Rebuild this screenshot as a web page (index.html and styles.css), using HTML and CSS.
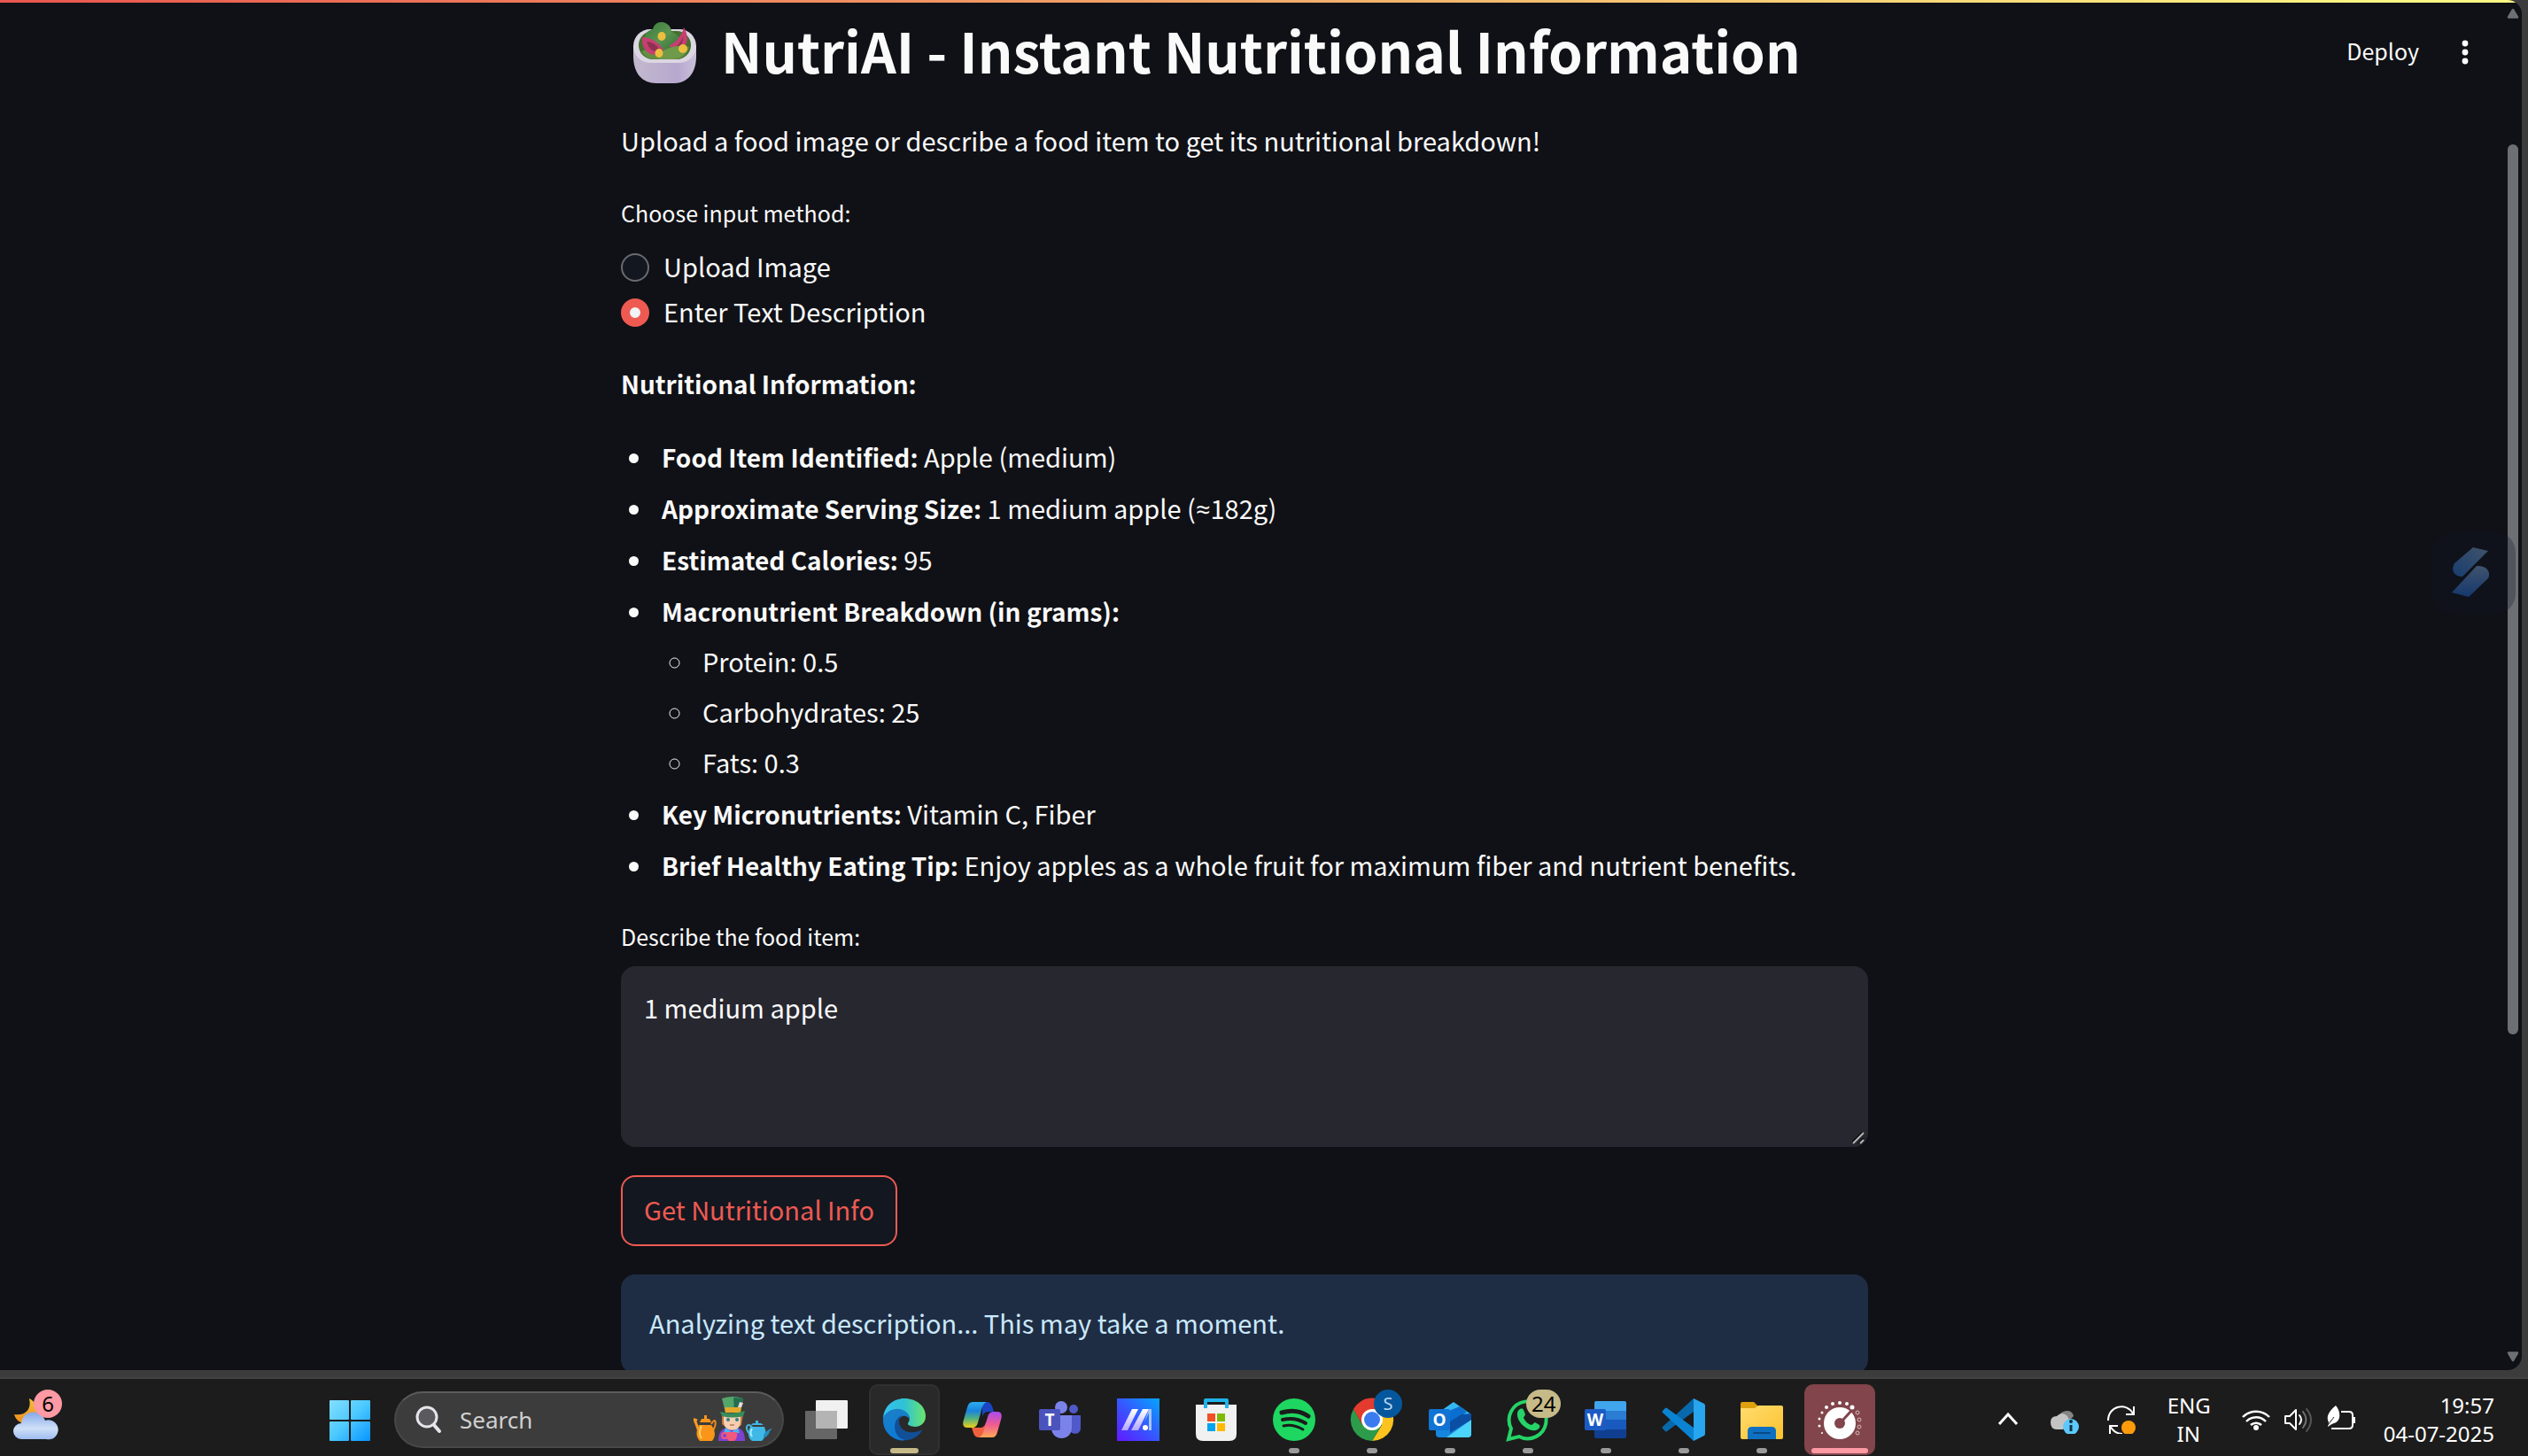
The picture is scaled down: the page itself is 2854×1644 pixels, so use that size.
FILE: index.html
```html
<!DOCTYPE html>
<html lang="en">
<head>
<meta charset="utf-8">
<meta name="viewport" content="width=device-width, initial-scale=1">
<title>NutriAI</title>
<link rel="stylesheet" href="styles.css">
</head>
<body>
<div class="browser">
  <div class="page">
    <div class="decoration"></div>
    <header class="toolbar">
      <button class="deploy" type="button">Deploy</button>
      <button class="kebab" type="button" aria-label="Main menu">
        <svg width="8" height="28" viewBox="0 0 8 28" fill="#fff"><circle cx="4" cy="4" r="3.4"/><circle cx="4" cy="14" r="3.4"/><circle cx="4" cy="24" r="3.4"/></svg>
      </button>
    </header>

    <main class="content">
      <h1 class="title">
        <svg class="salad" width="98" height="86" viewBox="0 0 98 86" aria-hidden="true">
          <defs>
            <linearGradient id="bowl" x1="0" x2="1"><stop offset="0" stop-color="#c3b9cd"/><stop offset=".7" stop-color="#b6a8cf"/><stop offset="1" stop-color="#cbc0db"/></linearGradient>
            <linearGradient id="leaf" x1="0" x2="1" y2="1"><stop offset="0" stop-color="#377a3b"/><stop offset=".5" stop-color="#5c9450"/><stop offset="1" stop-color="#2f6b33"/></linearGradient>
          </defs>
          <path d="M14 38V50c0 20 10 31 26 31h19c16 0 26-11 26-31V38z" fill="url(#bowl)"/>
          <rect x="14" y="20" width="71" height="38" rx="19" fill="#dcd6e3"/>
          <rect x="20" y="22" width="59" height="32" rx="16" fill="#44702d"/>
          <path d="M23 45q26 -12 54-5q-4 14-17 14H40q-12 0-17-9z" fill="#648f42"/>
          <path d="M28 36c-4-12 4-15 8-16 2-8 10-10 16-6 5 3 4 8 7 10 10 3 9 16 2 20-13 5-27 2-33-8z" fill="url(#leaf)"/>
          <path d="M24 29c8 0 17 4 24 14-4 10-26 8-24-14z" fill="#c63f72"/><path d="M29 34q8 0 15 9-10 6-15-9z" fill="#8e3151"/>
          <path d="M71 18c6 9 5 22-4 25-5 0-9-2-13-4 8-4 15-12 17-21z" fill="#c63f72"/><path d="M70 28q-2 8-9 12 9 3 9-12z" fill="#8e3151"/>
          <path d="M48 44q15-8 27-4-3 12-16 14H43z" fill="#6f9a4a"/>
          <g fill="#edbf3e"><ellipse cx="46" cy="28" rx="4.5" ry="5"/><ellipse cx="43" cy="47" rx="4.5" ry="5"/><ellipse cx="70" cy="42" rx="5" ry="5"/></g>
        </svg>
        <span>NutriAI - Instant Nutritional Information</span>
      </h1>
      <p class="text">Upload a food image or describe a food item to get its nutritional breakdown!</p>

      <fieldset class="radios">
        <legend class="label">Choose input method:</legend>
        <label class="radio"><input type="radio" name="method"><span>Upload Image</span></label>
        <label class="radio"><input type="radio" name="method" checked><span>Enter Text Description</span></label>
      </fieldset>

      <p class="text heading"><strong>Nutritional Information:</strong></p>
      <ul class="facts">
        <li><strong>Food Item Identified:</strong> Apple (medium)</li>
        <li><strong>Approximate Serving Size:</strong> 1 medium apple (<span class="approx">≈</span>182g)</li>
        <li><strong>Estimated Calories:</strong> 95</li>
        <li><strong>Macronutrient Breakdown (in grams):</strong>
          <ul class="macros">
            <li>Protein: 0.5</li>
            <li>Carbohydrates: 25</li>
            <li>Fats: 0.3</li>
          </ul>
        </li>
        <li><strong>Key Micronutrients:</strong> Vitamin C, Fiber</li>
        <li><strong>Brief Healthy Eating Tip:</strong> Enjoy apples as a whole fruit for maximum fiber and nutrient benefits.</li>
      </ul>

      <label class="label" for="food">Describe the food item:</label>
      <div class="field">
        <textarea class="food" id="food">1 medium apple</textarea>
        <svg class="grip" width="14" height="14" viewBox="0 0 14 14" aria-hidden="true"><path d="M0 12L12 0M7 13L13 7" stroke="#0c0c0e" stroke-width="2"/><path d="M1 13L13 1M9 13l4-4" stroke="#b4b4b6" stroke-width="2"/></svg>
      </div>
      <button class="submit" type="button">Get Nutritional Info</button>
      <div class="info" role="status">Analyzing text description... This may take a moment.</div>
    </main>

    <div class="scrollbar" aria-hidden="true">
      <svg width="14" height="12" viewBox="0 0 14 12"><path d="M2 10.500h10L7 2z" fill="#6e6f73" stroke="#6e6f73" stroke-width="2.500" stroke-linejoin="round"/></svg>
      <div class="track"><div class="thumb"></div></div>
      <svg width="14" height="12" viewBox="0 0 14 12"><path d="M2 1.500h10L7 10z" fill="#6e6f73" stroke="#6e6f73" stroke-width="2.500" stroke-linejoin="round"/></svg>
    </div>

    <button class="extension" type="button" aria-label="Open extension">
      <svg width="94" height="94" viewBox="0 0 94 94">
        <defs>
          <linearGradient id="ext1" x1="1" x2="0" y2="1"><stop offset="0" stop-color="#42536a"/><stop offset="1" stop-color="#173e70"/></linearGradient>
          <linearGradient id="ext2" x1="0" x2="0" y2="1"><stop offset="0" stop-color="#40536d"/><stop offset="1" stop-color="#14386d"/></linearGradient>
        </defs>
        <path d="M46 18l17 4-29 29c-8 0-14-6-9-15z" fill="url(#ext1)"/>
        <path d="M50 39c9-1 17 5 13 14L41 74l-19-5z" fill="url(#ext2)"/>
      </svg>
    </button>
  </div>
</div>

<footer class="taskbar">
  <div class="widgets">
    <button class="app" type="button" aria-label="Weather">
      <svg width="80" height="80" viewBox="0 0 80 80">
        <defs>
          <linearGradient id="moon" x1="0" x2="0" y2="1"><stop offset="0" stop-color="#f2c23a"/><stop offset="1" stop-color="#f28a1c"/></linearGradient>
          <linearGradient id="cloud" x1="0" x2="0" y2="1"><stop offset="0" stop-color="#86a8ea"/><stop offset=".6" stop-color="#cfe0f7"/><stop offset="1" stop-color="#9dbcf0"/></linearGradient>
        </defs>
        <path d="M33 16c3 12-4 20-17 18 2 7 8 11 14 10l12-8c2-10-3-17-9-20z" fill="url(#moon)"/>
        <path d="M24 62a9 9 0 0 1 0-18c2-16 22-16 27-3a11 11 0 1 1 1 21z" fill="url(#cloud)"/>
      </svg>
      <span class="badge badge-pink">6</span>
    </button>
  </div>

  <nav class="apps" aria-label="Taskbar">
    <button class="app" type="button" aria-label="Start">
      <svg width="80" height="80" viewBox="0 0 80 80">
        <defs><linearGradient id="win" gradientUnits="userSpaceOnUse" x1="17" y1="18" x2="63" y2="64"><stop offset="0" stop-color="#84dfff"/><stop offset=".5" stop-color="#4bc8ff"/><stop offset="1" stop-color="#0794ff"/></linearGradient></defs>
        <g fill="url(#win)"><rect x="17" y="18" width="22" height="22" rx="1"/><rect x="41" y="18" width="22" height="22" rx="1"/><rect x="17" y="42" width="22" height="22" rx="1"/><rect x="41" y="42" width="22" height="22" rx="1"/></g>
      </svg>
    </button>

    <div class="search">
      <svg width="30" height="32" viewBox="0 0 30 32" fill="none" stroke="#e4e6ea" aria-hidden="true"><circle cx="13" cy="13" r="11" stroke-width="3" fill="#5a5a5c"/><path d="M21 22l6 7" stroke-width="4" stroke-linecap="round"/></svg>
      <input type="search" placeholder="Search" aria-label="Search">
      <svg width="90" height="52" viewBox="0 0 90 52" aria-hidden="true">
        <path d="M4 27l-3-1q4 9 5 14" fill="none" stroke="#f59a22" stroke-width="3"/><path d="M20 31c5-9 7-1 1 9" fill="none" stroke="#f08a1a" stroke-width="2"/>
        <path d="M7 29h13l-2-4h-3v-4h-3v4H9zM6 32c-3 7-4 12 1 18h14c5-6 3-12-1-18z" fill="#f99519"/><path d="M9 33c-3 6-3 10 0 14" fill="none" stroke="#ffcf66" stroke-width="2"/>
        <path d="M28 50c0-10 4-14 10-15h11c6 1 9 6 9 15z" fill="#7d42d1"/><path d="M36 35l7 5 7-5 2 6H34z" fill="#43b8ee"/>
        <path d="M32 20h24l-2 12-5 4 3-14H34l3 13-5-4z" fill="#c27a43"/>
        <path d="M34 22h19v6c0 13-19 13-19 0z" fill="#f7cfae"/><circle cx="39" cy="26" r="2" fill="#2b7f8c"/><circle cx="49" cy="26" r="2" fill="#2b7f8c"/><path d="M41 32h5" stroke="#9a4b3b"/>
        <path d="M32 2q12-4 24 0l-3 16H36z" fill="#54a66b"/><path d="M45 1q6 0 11 1l-3 16h-7z" fill="#246e50"/><path d="M35 12h19l-1 6H36z" fill="#e5a92d"/><path d="M50 12l2-6 4 1-2 5z" fill="#ead9dc"/><path d="M30 17q14 4 28-1l-2 6q-12 3-24 0z" fill="#388c5c"/>
        <path d="M37 40h12q1 7-3 10h-6q-4-3-3-10z" fill="#f2597c"/><circle cx="35" cy="44" r="3" fill="none" stroke="#f2597c" stroke-width="2"/>
        <path d="M66 34c-5-5-9 0-3 8" fill="none" stroke="#42b7de" stroke-width="2"/><path d="M65 32h14l-3-2h-3v-3h-3v3h-3zM64 34h16c3 8 1 12-3 16H66c-5-4-5-10-2-16z" fill="#3fb8e6"/><path d="M79 43q5-7 10-7-3 2-4 6-3 4-6 5z" fill="#258ebd"/><path d="M66 36q-3 5 0 9" fill="none" stroke="#a8ecff" stroke-width="2"/>
      </svg>
    </div>

    <button class="app" type="button" aria-label="Task view">
      <svg width="80" height="80" viewBox="0 0 80 80">
        <rect x="28" y="18" width="36" height="32" rx="1" fill="#f1f1f1"/><rect x="16" y="30" width="36" height="32" rx="1" fill="#666"/><path d="M28 30h23q1 0 1 1v19H28z" fill="#b4b4b4"/>
      </svg>
    </button>

    <button class="app app-open" type="button" aria-label="Edge">
      <svg width="80" height="80" viewBox="0 0 80 80">
        <defs>
          <linearGradient id="e1" x1="0" x2="1"><stop offset="0" stop-color="#35c1f1"/><stop offset=".5" stop-color="#2fc2d5"/><stop offset="1" stop-color="#6be56a"/></linearGradient>
          <linearGradient id="e2" x1="0" x2="0" y2="1"><stop offset="0" stop-color="#1c7fc6"/><stop offset="1" stop-color="#0b7bd8"/></linearGradient>
        </defs>
        <path d="M16 38C17 24 28 16 40 16c14 0 24 9 24 20 0 8-6 12-12 12-5 0-9-2-8-4 3-4 2-9-2-12-8-6-20-4-26 6z" fill="url(#e1)"/>
        <path d="M16 38c4-9 16-13 24-8 4 2 6 6 6 10-1-2-4-5-8-4-9 3-5 21 11 22-6 6-12 6-15 5-11-3-19-12-18-25z" fill="url(#e2)"/>
        <path d="M37 35c-6 5-3 17 8 19 7 1 12-1 15-3-1 5-10 13-19 12-14-2-16-23-4-28z" fill="#114f98"/>
      </svg>
      <span class="mark mark-active"></span>
    </button>

    <button class="app" type="button" aria-label="Copilot">
      <svg width="80" height="80" viewBox="0 0 80 80">
        <defs>
          <linearGradient id="c1" x1="0" x2="0" y2="1"><stop offset="0" stop-color="#2baef0"/><stop offset=".35" stop-color="#1a83dc"/><stop offset=".65" stop-color="#53b27c"/><stop offset="1" stop-color="#f2cf17"/></linearGradient>
          <linearGradient id="c2" x1="0" x2="0" y2="1"><stop offset="0" stop-color="#a84cf0"/><stop offset=".5" stop-color="#ef5b90"/><stop offset="1" stop-color="#ffa955"/></linearGradient>
        </defs>
        <path d="M40 20h5c5 0 6 4 8 11h-6c-4 0-6 2-7 6z" fill="#1a46c4"/><path d="M28 49h9c4 0 6-2 7-6l2 17H36c-6 0-6-6-8-11z" fill="#f1603e"/>
        <path d="M29 20h16c-5 2-5 6-7 13l-3 10c-1 4-3 6-7 6h-5c-4 0-6-3-4-9l4-14c1-4 3-6 6-6z" fill="url(#c1)"/>
        <path d="M51 60H36c5-2 5-6 7-13l3-10c1-4 3-6 7-6h4c4 0 6 3 4 9l-4 14c-1 4-3 6-6 6z" fill="url(#c2)"/>
      </svg>
    </button>

    <button class="app" type="button" aria-label="Teams">
      <svg width="80" height="80" viewBox="0 0 80 80">
        <circle cx="55" cy="28" r="5" fill="#5059c9"/><path d="M52 35h11v14c0 8-8 8-11 5z" fill="#5059c9"/>
        <circle cx="41" cy="26" r="7" fill="#7b83eb"/><path d="M30 35h23v14c0 16-23 16-23 0z" fill="#7b83eb"/>
        <rect x="16" y="28" width="24" height="24" rx="2" fill="#4b53bc"/><text x="28" y="47" class="glyph">T</text>
      </svg>
    </button>

    <button class="app" type="button" aria-label="MyASUS">
      <svg width="80" height="80" viewBox="0 0 80 80">
        <defs>
          <linearGradient id="m1" x1="0" y1="1" x2="1" y2="0"><stop offset="0" stop-color="#6219ff"/><stop offset=".5" stop-color="#3558ff"/><stop offset="1" stop-color="#04a6ff"/></linearGradient>
          <linearGradient id="m2" x1="0" x2="0" y2="1"><stop offset="0" stop-color="#fff"/><stop offset="1" stop-color="#b3a9ff"/></linearGradient>
        </defs>
        <rect x="16" y="16" width="48" height="48" fill="url(#m1)"/>
        <path d="M33 28h7L28 52h-7zM45 28h7L40 52h-8z" fill="url(#m2)"/><path d="M52 28h3v24h-3V32l-5 11z" fill="#a9c4ff"/><circle cx="48" cy="49" r="3" fill="#fff"/>
      </svg>
    </button>

    <button class="app" type="button" aria-label="Microsoft Store">
      <svg width="80" height="80" viewBox="0 0 80 80">
        <path d="M17 23h46v33q0 8-8 8H25q-8 0-8-8z" fill="#f1f1f1"/><path d="M28 27v-9h24v9" fill="none" stroke="#20b4ea" stroke-width="4" stroke-linejoin="round"/>
        <path d="M30 33h9v9h-9z" fill="#f25022"/><path d="M41 33h9v9h-9z" fill="#7fba00"/><path d="M30 44h9v9h-9z" fill="#00a4ef"/><path d="M41 44h9v9h-9z" fill="#ffb900"/>
      </svg>
    </button>

    <button class="app" type="button" aria-label="Spotify">
      <svg width="80" height="80" viewBox="0 0 80 80">
        <circle cx="40" cy="40" r="24" fill="#1ed760"/><g fill="none" stroke="#1b1b1b" stroke-linecap="round"><path d="M26 32c10-3 21-2 30 4" stroke-width="5"/><path d="M27 40c9-2 18-1 26 4" stroke-width="4"/><path d="M28 47c8-2 15 0 22 4" stroke-width="3"/></g>
      </svg>
      <span class="mark"></span>
    </button>

    <button class="app" type="button" aria-label="Chrome">
      <svg width="80" height="80" viewBox="0 0 80 80">
        <path d="M19 28A24 24 0 0 1 61 28H40L29 46z" fill="#e33b2e"/><path d="M61 28A24 24 0 0 1 40 64L51 46 40 28z" fill="#fcc31e"/><path d="M19 28A24 24 0 0 0 40 64L51 46H29z" fill="#2c9c4b"/>
        <circle cx="40" cy="40" r="12" fill="#fff"/><circle cx="40" cy="40" r="9" fill="#3a7cf0"/>
      </svg>
      <span class="badge badge-blue">S</span>
      <span class="mark"></span>
    </button>

    <button class="app" type="button" aria-label="Outlook">
      <svg width="80" height="80" viewBox="0 0 80 80">
        <path d="M24 34l20-14 20 14v10H24z" fill="#35b8f1"/><path d="M29 34l22-9 8 6-20 16z" fill="#0a6fd0"/><path d="M36 48l27-15v8L42 58z" fill="#07499c"/><path d="M24 42l40 0v14q0 4-4 4H28q-4 0-4-4z" fill="#1586dc"/><path d="M64 40v16q0 4-4 4H36z" fill="#4bd3fb"/><path d="M40 42l13-8 11-1v7L40 55z" fill="#0b4fa5"/>
        <rect x="16" y="28" width="24" height="24" rx="2" fill="#1173d4"/><text x="28" y="47" class="glyph">O</text>
      </svg>
      <span class="mark"></span>
    </button>

    <button class="app" type="button" aria-label="WhatsApp">
      <svg width="80" height="80" viewBox="0 0 80 80">
        <path d="M18 62l3-12a21 21 0 1 1 9 9z" fill="none" stroke="#25d366" stroke-width="4"/>
        <path d="M31 28c2-1 4 0 4 1l2 5c0 1-2 3-2 4 2 4 5 7 9 8 1 0 3-3 4-3l5 3c1 1 0 4-2 5-8 5-24-7-23-18 0-2 1-4 3-5z" fill="#25d366"/>
      </svg>
      <span class="badge badge-sand">24</span>
      <span class="mark"></span>
    </button>

    <button class="app" type="button" aria-label="Word">
      <svg width="80" height="80" viewBox="0 0 80 80">
        <path d="M27 21q0-2 2-2h32q2 0 2 2v9H27z" fill="#41a5ee"/><path d="M27 30h36v10H27z" fill="#2b7cd3"/><path d="M27 40h36v11H27z" fill="#185abd"/><path d="M27 51h36v8q0 2-2 2H29q-2 0-2-2z" fill="#103f91"/>
        <rect x="16" y="28" width="24" height="24" rx="2" fill="#1d5bc4"/><text x="28" y="47" class="glyph">W</text>
      </svg>
      <span class="mark"></span>
    </button>

    <button class="app" type="button" aria-label="Visual Studio Code">
      <svg width="80" height="80" viewBox="0 0 80 80">
        <path d="M51 16v15L21 53q-1 1-2 0l-3-3q-1-1 0-2z" fill="#0868ac"/><path d="M51 64V49L21 27q-1-1-2 0l-3 3q-1 1 0 2z" fill="#0a84d2"/><path d="M51 16l12 6q1 1 1 2v32q0 1-1 2l-12 6z" fill="#27a5ee"/>
      </svg>
      <span class="mark"></span>
    </button>

    <button class="app" type="button" aria-label="File Explorer">
      <svg width="80" height="80" viewBox="0 0 80 80">
        <defs><linearGradient id="fold" x1="0" x2="1" y2="1"><stop offset="0" stop-color="#ffdc70"/><stop offset="1" stop-color="#fcc22d"/></linearGradient></defs>
        <path d="M16 22q0-2 2-2h13l6 6v6H16z" fill="#dfa00e"/><path d="M16 27h16l4-3h26q2 0 2 2v34q0 2-2 2H18q-2 0-2-2z" fill="url(#fold)"/><path d="M24 62v-9q0-5 5-5h22q5 0 5 5v9z" fill="#0f70c2"/><path d="M31 55h18" stroke="#0a4a86" stroke-width="2" stroke-linecap="round"/>
      </svg>
      <span class="mark"></span>
    </button>

    <button class="app app-alert" type="button" aria-label="Screen recorder">
      <svg width="80" height="80" viewBox="0 0 80 80">
        <circle cx="40" cy="44" r="18" fill="#fff"/><circle cx="40" cy="44" r="6" fill="#81454b"/><path d="M43 41l10-11" stroke="#81454b" stroke-width="3"/>
        <g fill="#fff"><circle cx="54" cy="26" r="2.500"/><circle cx="48" cy="22" r="2"/><circle cx="40" cy="21" r="2"/><circle cx="32" cy="22" r="2"/><circle cx="25" cy="26" r="2"/><circle cx="20" cy="32" r="1.500"/><circle cx="17" cy="39" r="1.500"/><circle cx="17" cy="47" r="1.500"/><circle cx="20" cy="55" r="1"/></g>
        <g fill="none" stroke="#d9b9bb"><circle cx="60" cy="32" r="2"/><circle cx="62" cy="40" r="2"/><circle cx="62" cy="48" r="2"/><circle cx="60" cy="55" r="2"/></g>
      </svg>
      <span class="mark mark-alert"></span>
    </button>
  </nav>

  <div class="tray">
    <button class="tray-item" type="button" aria-label="Show hidden icons"><svg width="32" height="32" viewBox="0 0 32 32"><path d="M6 21l10-11 10 11" fill="none" stroke="#fff" stroke-width="3"/></svg></button>
    <button class="tray-item" type="button" aria-label="OneDrive"><svg width="32" height="32" viewBox="0 0 32 32"><path d="M9 12q4-7 11-6 5 1 6 6l-8 8z" fill="#858585"/><path d="M6 27q-6-1-6-8t7-7q6-6 12 0l3 6-8 9z" fill="#c4c4c4"/><circle cx="23" cy="24" r="9" fill="#5dc8fb"/><path d="M23 22v7" stroke="#12303e" stroke-width="3"/><circle cx="23" cy="18" r="2" fill="#12303e"/></svg></button>
    <button class="tray-item" type="button" aria-label="Updates"><svg width="32" height="32" viewBox="0 0 32 32"><g fill="none" stroke="#fff" stroke-width="2"><path d="M1 17C1 0 22-4 29 9M30 1v9h-9"/><path d="M3 32v-9h9M3 23c4 7 8 9 14 9"/></g><circle cx="24" cy="25" r="8" fill="#ff9a0a"/></svg></button>
    <button class="tray-item lang" type="button">ENG<br>IN</button>
    <button class="tray-item quick" type="button" aria-label="Network, volume, battery">
      <svg width="32" height="32" viewBox="0 0 32 32"><g fill="none" stroke="#fff" stroke-width="2.500"><path d="M1 13a21 21 0 0 1 30 0M5 18a15 15 0 0 1 22 0M10 22a9 9 0 0 1 12 0"/></g><circle cx="16" cy="25" r="3" fill="#fff"/></svg>
      <svg width="32" height="32" viewBox="0 0 32 32" fill="none" stroke-width="2" stroke-linecap="round"><path d="M1 12h5l7-7v22l-7-7H1z" stroke="#fff" stroke-linejoin="round"/><path d="M17 11q4 5 0 10" stroke="#fff"/><path d="M21 7q7 9 0 18" stroke="#737373"/><path d="M25 4q10 12 0 25" stroke="#555"/></svg>
      <svg width="32" height="32" viewBox="0 0 32 32"><path d="M16 7h9q4 0 4 4v11q0 4-4 4H5" fill="none" stroke="#fff" stroke-width="2"/><path d="M29 13h3v7h-3z" fill="#fff"/><path d="M10 0c6 7 6 18-2 20-2 1-3 1-4 2l-3 2 1-5C-2 12 4 5 10 0z" fill="#fff" stroke="#1c1c1c" stroke-width="3" paint-order="stroke"/><path d="M1 22l7-9" stroke="#1c1c1c"/></svg>
    </button>
    <button class="tray-item clock" type="button"><time>19:57<br>04-07-2025</time></button>
  </div>
</footer>
</body>
</html>
```
FILE: styles.css
```css
* {
  box-sizing: border-box;
}

html {
  color-scheme: dark;
}

body {
  margin: 0;
  height: 100vh;
  display: flex;
  flex-direction: column;
  overflow: hidden;
  background: #3c3c3c;
  color: #fafafa;
  font: 29px/52px "Noto Sans CJK SC", "Noto Sans", sans-serif;
}

button {
  padding: 0;
  border: 0;
  background: none;
  color: inherit;
  font: inherit;
}

svg {
  display: block;
}

strong {
  font-size: 28px;
  line-height: 1;
}

.browser {
  flex: 1;
  min-height: 0;
  padding: 0 7px 8px 0;
  border-bottom: 2px solid #434343;
}

.page {
  position: relative;
  height: 100%;
  overflow: hidden;
  padding-right: 37px;
  border-radius: 0 16px 16px 0;
  background: #101116;
}

.decoration {
  position: absolute;
  inset: 0 0 auto;
  height: 3px;
  background: linear-gradient(90deg, #e9564f, #fdf783 95%);
}

.toolbar {
  position: absolute;
  top: 33px;
  right: 60px;
  display: flex;
  align-items: center;
  gap: 48px;
}

.deploy {
  height: 52px;
  padding-bottom: 4px;
  font-size: 25px;
  line-height: 48px;
}

.content {
  display: flex;
  flex-direction: column;
  max-width: 1408px;
  margin: 0 auto;
  padding-top: 13px;
}

.title {
  display: flex;
  gap: 15px;
  margin: 0 0 33px;
  font-size: 62px;
  font-weight: 700;
  line-height: 86px;
  white-space: nowrap;
}

.text {
  margin: 0;
}

.radios {
  margin: 35px 0 28px;
  padding: 0;
  border: 0;
}

.label {
  padding: 0;
  font-size: 25px;
  line-height: 42px;
}

.radios .label {
  margin-bottom: 15px;
}

.radio {
  display: flex;
  align-items: center;
  gap: 16px;
  height: 51px;
}

.radio span {
  padding-bottom: 4px;
  line-height: 48px;
}

.radio input {
  appearance: none;
  width: 32px;
  height: 32px;
  margin: 0;
  border: 2px solid #6a6b70;
  border-radius: 50%;
  background: #131720;
}

.radio input:checked {
  border: 10px solid #ee5a52;
  background: #f0f2f6;
}

.facts,
.macros {
  margin: 0;
  padding-left: 38px;
}

.facts li {
  padding-left: 8px;
}

.facts {
  margin: 28px 0 31px;
  line-height: 58px;
}

.macros {
  line-height: 57px;
}

.approx {
  font-family: "Open Sans", sans-serif;
  line-height: 1;
}

.field {
  position: relative;
  margin-top: 13px;
}

.food {
  display: block;
  width: 100%;
  height: 204px;
  padding: 20px 26px;
  border: 0;
  border-radius: 16px;
  background: #272730;
  color: inherit;
  font: inherit;
  resize: none;
}

.grip {
  position: absolute;
  right: 4px;
  bottom: 3px;
}

.submit {
  align-self: flex-start;
  height: 80px;
  margin: 32px 0;
  padding: 10px 24px 14px;
  border: 2px solid #ee5a52;
  border-radius: 16px;
  background: #131720;
  color: #ee5a52;
}

.info {
  padding: 28px 32px 32px;
  border-radius: 16px;
  background: #1f2d44;
  color: #c9e8fb;
}

.scrollbar {
  position: absolute;
  top: 9px;
  right: 3px;
  bottom: 9px;
  width: 14px;
  display: flex;
  flex-direction: column;
}

.track {
  flex: 1;
  padding: 142px 1px 0;
}

.thumb {
  height: 73.7%;
  border-radius: 6px;
  background: #6e6f73;
}

.extension {
  position: absolute;
  top: 600px;
  right: 7px;
  border-radius: 24px;
  background: rgba(14, 22, 40, 0.3);
}

.taskbar {
  display: grid;
  grid-template-columns: 355px auto 1fr;
  height: 87px;
  padding-top: 6px;
  background: #1c1c1c;
  color: #fff;
  font: 24px/32px "Noto Sans", "Open Sans", sans-serif;
}

.apps {
  display: flex;
  gap: 8px;
}

.app {
  position: relative;
  width: 80px;
  height: 80px;
  border-radius: 10px;
}

.app-open {
  background: #292929;
  box-shadow: inset 0 0 0 2px #303030;
}

.app-alert {
  background: #81454b;
}

.mark {
  position: absolute;
  left: 34px;
  top: 72px;
  width: 12px;
  height: 6px;
  border-radius: 3px;
  background: #9a9a9a;
}

.mark-active {
  left: 24px;
  width: 32px;
  background: #c5ba88;
}

.mark-alert {
  left: 8px;
  width: 64px;
  background: #ff99a4;
}

.badge {
  position: absolute;
  left: 38px;
  top: 6px;
  min-width: 32px;
  height: 32px;
  padding: 0 6px;
  border-radius: 16px;
  color: #000;
  font-size: 24px;
  line-height: 32px;
  text-align: center;
}

.badge-pink {
  background: #ff99a4;
}

.badge-blue {
  left: 42px;
  background: #05579d;
  color: #bcd8f0;
  font-size: 20px;
}

.badge-sand {
  background: #c5ba88;
}

.glyph {
  fill: #fff;
  font: 700 19px "Open Sans", sans-serif;
  text-anchor: middle;
}

.search {
  display: flex;
  align-items: center;
  width: 440px;
  height: 64px;
  margin: 8px 0 0 2px;
  padding: 0 10px 0 22px;
  border: 2px solid #484848;
  border-top-color: #5c5c5c;
  border-radius: 32px;
  background: #3c3c3c;
}

.search input {
  flex: 1;
  min-width: 0;
  padding: 0 0 0 20px;
  border: 0;
  background: none;
  color: inherit;
  font: inherit;
  font-size: 26px;
}

.search input::placeholder {
  color: #d0d0d0;
  opacity: 1;
}

.tray {
  display: flex;
  justify-content: flex-end;
  align-items: center;
  gap: 32px;
  height: 80px;
  padding-right: 38px;
}

.lang {
  width: 48px;
  margin: 0 4px;
  text-align: center;
}

.quick {
  display: flex;
  gap: 16px;
}

.clock {
  text-align: right;
}
```
